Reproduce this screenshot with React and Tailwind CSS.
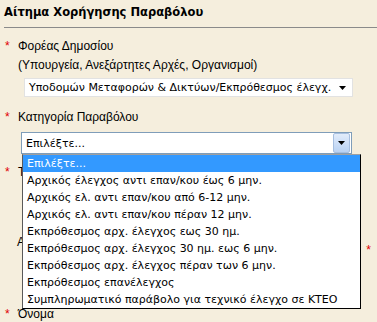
import React from 'react';

const options = [
    'Επιλέξτε...',
    'Αρχικός έλεγχος αντι επαν/κου έως 6 μην.',
    'Αρχικός ελ. αντι επαν/κου από 6-12 μην.',
    'Αρχικός ελ. αντι επαν/κου πέραν 12 μην.',
    'Εκπρόθεσμος αρχ. έλεγχος εως 30 ημ.',
    'Εκπρόθεσμος αρχ. έλεγχος 30 ημ. εως 6 μην.',
    'Εκπρόθεσμος αρχ. έλεγχος πέραν των 6 μην.',
    'Εκπρόθεσμος επανέλεγχος',
    'Συμπληρωματικό παράβολο για τεχνικό έλεγχο σε ΚΤΕΟ',
];

const label = { fontFamily: '"Liberation Sans", Arial, sans-serif' };

function Star() {
    return <span className="text-[#e00000] w-[14px] shrink-0 pl-[1px]">*</span>;
}

function Arrow() {
    return (
        <svg width="7" height="4" viewBox="0 0 7 4">
            <path d="M0 0h7L3.5 4z" fill="#000" />
        </svg>
    );
}

export default function App() {
    return (
        <div
            className="w-[377px] h-[322px] overflow-hidden bg-[#f5eedd] text-[11px] text-black leading-[17px] pl-[4px]"
            style={{ fontFamily: 'Tahoma, "DejaVu Sans", sans-serif' }}
        >
            {/* Header */}
            <h1 className="font-bold text-[11.5px] leading-[16px] pt-[4px]">Αίτημα Χορήγησης Παραβόλου</h1>
            <div className="mt-[7px] h-px bg-[#8a8a8a]"></div>

            {/* Φορέας */}
            <div className="flex mt-[10px] text-[12px]" style={label}>
                <Star />
                <div>Φορέας Δημοσίου</div>
            </div>
            <div className="pl-[14px] mt-[2px] text-[12px]" style={label}>(Υπουργεία, Ανεξάρτητες Αρχές, Οργανισμοί)</div>
            <div className="ml-[20px] mt-[4px] w-[329px] h-[19px] bg-white border border-[#e2e2e2] flex items-center justify-between pl-[4px] pr-[6px]">
                <span className="whitespace-nowrap">Υποδομών Μεταφορών &amp; Δικτύων/Εκπρόθεσμος έλεγχ.</span>
                <Arrow />
            </div>

            {/* Κατηγορία */}
            <div className="flex mt-[12px] text-[12px]" style={label}>
                <Star />
                <div>Κατηγορία Παραβόλου</div>
            </div>
            <div className="relative ml-[17px] mt-[6px] w-[331px]">
                <div className="h-[22px] bg-white border border-[#7f9db9] flex items-center justify-between pl-[4px] pr-[1px]">
                    <span>Επιλέξτε...</span>
                    <div className="w-[17px] h-[20px] rounded-[2px] border border-[#a7bfe0] bg-gradient-to-b from-[#e2ecfb] to-[#b9d2f3] flex items-center justify-center">
                        <Arrow />
                    </div>
                </div>

                {/* Open list */}
                <div className="absolute left-[1px] top-[22px] w-[339px] z-10 bg-white border-t border-t-[#a0a0a0] border-l border-l-[#5a5a5a] border-r border-r-black border-b border-b-black">
                    {options.map((o, i) => (
                        <div
                            key={o}
                            className={
                                'h-[17px] pl-[4px] whitespace-nowrap ' +
                                (i === 0 ? 'bg-[#3399ff] text-white' : '')
                            }
                        >
                            {o}
                        </div>
                    ))}
                </div>
            </div>

            {/* Fields hidden behind the list */}
            <div className="flex mt-[10px] text-[12px]" style={label}>
                <Star />
                <div>Τύπος Οχήματος</div>
            </div>
            <div className="flex justify-between mt-[53px] pl-[13px] pr-[6px] text-[12px]" style={label}>
                <div>Αριθμός</div>
                <span className="relative top-[8px] text-[#e00000]">*</span>
            </div>
            <div className="flex mt-[55px] text-[12px]" style={label}>
                <Star />
                <div>Όνομα</div>
            </div>
        </div>
    );
}
